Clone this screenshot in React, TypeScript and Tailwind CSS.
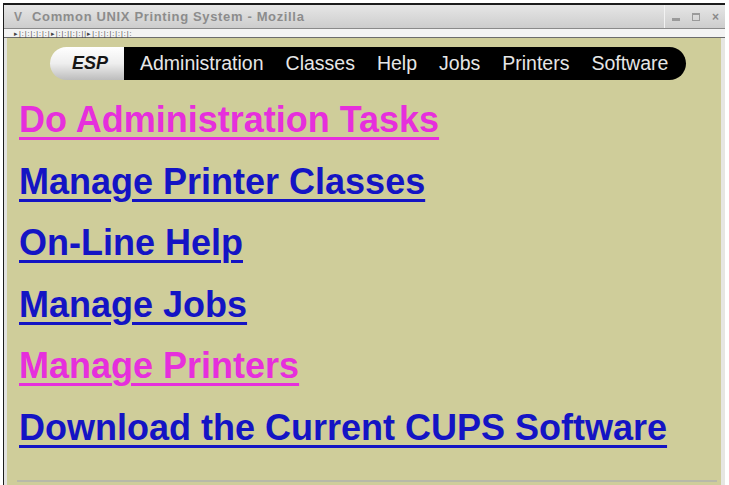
import React from "react";

const links: { text: string; color: string }[] = [
  { text: "Do Administration Tasks", color: "pink" },
  { text: "Manage Printer Classes", color: "blue" },
  { text: "On-Line Help", color: "blue" },
  { text: "Manage Jobs", color: "blue" },
  { text: "Manage Printers", color: "pink" },
  { text: "Download the Current CUPS Software", color: "blue" },
];

const nav = ["Administration", "Classes", "Help", "Jobs", "Printers", "Software"];

export default function App() {
  return (
    <div
      className="w-[729px] h-[485px] bg-white overflow-hidden pl-[3px] pr-[4px] pt-[3px]"
      style={{ fontFamily: '"Liberation Sans", Arial, sans-serif' }}
    >
      <div className="h-full flex flex-col border-t-2 border-l border-[#1c1c1c]">
        {/* Title bar */}
        <div className="h-[24px] flex items-center bg-gradient-to-b from-[#e6e6e6] to-[#cdcdcd] border-b border-[#8a8a8a]">
          <div className="w-[28px] flex justify-center text-[#8e8e8e] text-[12px] font-bold">V</div>
          <div className="text-[13px] font-bold text-[#8c8c8c] tracking-[0.65px]">
            Common UNIX Printing System - Mozilla
          </div>
          <div className="flex-1" />
          <div className="h-full border-l border-[#f2f2f2] w-px" />
          <div className="flex items-center gap-[12px] pl-[7px] pr-[6px] text-[#8a8a8a]">
            <div className="w-[8px] h-[3px] bg-[#9a9a9a] mt-[6px]" />
            <div className="w-[8px] h-[8px] border border-[#9a9a9a] border-t-2" />
            <div className="text-[12px] font-bold leading-none">×</div>
          </div>
        </div>
        {/* tiny strip */}
        <div className="h-[9px] bg-[#f3f3f3] border-b border-[#6c6c6c] flex items-center pl-[10px]">
          <div className="text-[7px] leading-none text-[#444] tracking-[1px] whitespace-nowrap">
            ▸|:|:|:|:|:|▸|:|:||:|:||▸|:|:|:|:|:|:|:
          </div>
        </div>
        {/* content */}
        <div className="flex-1 flex min-h-0">
          <div className="w-[3px] bg-[#e2e2de]" />
          <div className="flex-1 bg-[#cfcd9a] pt-[9px] flex flex-col">
            {/* nav bar */}
            <div className="ml-[43px] w-[636px] h-[33px] flex shrink-0">
              <div className="w-[74px] h-full rounded-l-[17px] bg-gradient-to-b from-[#ffffff] via-[#eeeeee] to-[#bdbdbd] flex items-center justify-center">
                <span className="text-[18px] font-bold italic text-[#151515] pl-[6px]">ESP</span>
              </div>
              <div className="flex-1 h-full bg-black rounded-r-[17px] flex items-center pl-[16px] gap-[22px]">
                {nav.map((n) => (
                  <span key={n} className="text-[19.5px] text-[#e6e6e6] leading-none">
                    {n}
                  </span>
                ))}
              </div>
            </div>
            {/* links */}
            <div className="flex flex-col gap-[19.5px] pl-[12px] mt-[19px]">
              {links.map((l) => (
                <div key={l.text} className="text-[36px] leading-[42px] h-[42px] font-bold whitespace-nowrap">
                  <a
                    href="#"
                    className={
                      "underline decoration-[2.5px] underline-offset-[5px] " +
                      (l.color === "pink" ? "text-[#e62fdc]" : "text-[#1414c4]")
                    }
                  >
                    {l.text}
                  </a>
                </div>
              ))}
            </div>
            <div className="flex-1" />
            <div className="ml-[10px] mr-[4px] mb-[3px] h-[2px] bg-[#b9b9a9] shrink-0" />
          </div>
          <div className="w-[4px] bg-[#e6e6e2]" />
        </div>
      </div>
    </div>
  );
}
